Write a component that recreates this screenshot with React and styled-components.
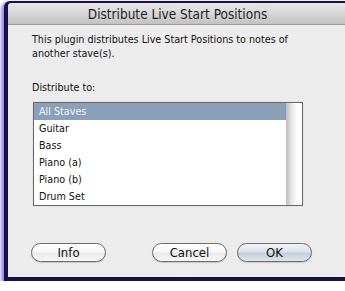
import React, { useState } from 'react';
import styled, { createGlobalStyle } from 'styled-components';

const GlobalStyle = createGlobalStyle`
  body {
    margin: 0;
    background: #ffffff;
    font-family: "DejaVu Sans Condensed", "DejaVu Sans", sans-serif;
  }
`;

const Frame = styled.div`
  width: 339px;
  margin: 1px 0 0 4px;
  padding: 2px 3px 4px 4px;
  background: #160f4c;
  border-radius: 6px 6px 0 0;
  box-shadow: -3px 1px 3px rgba(90, 80, 220, 0.55), 0 5px 5px rgba(110, 100, 230, 0.55);
`;

const Window = styled.div`
  height: 274px;
  display: flex;
  flex-direction: column;
  background: #ececec;
  border-radius: 4px 4px 0 0;
  overflow: hidden;
`;

const TitleBar = styled.div`
  height: 21px;
  flex-shrink: 0;
  display: flex;
  align-items: center;
  justify-content: center;
  background: linear-gradient(#e8e8e8, #d2d2d2 60%, #c2c2c2);
  border-bottom: 1px solid #9a9a9a;
  font-size: 13.5px;
  color: #1e1e1e;
`;

const Content = styled.div`
  flex: 1;
  display: flex;
  flex-direction: column;
  padding: 8px 0 15px 24px;
`;

const Description = styled.p`
  margin: 0;
  width: 275px;
  font-size: 10.7px;
  line-height: 14px;
  color: #111;
`;

const Label = styled.div`
  margin-top: 20px;
  font-size: 10.7px;
  line-height: 14px;
  color: #111;
`;

const ListBox = styled.div`
  margin: 7px 0 0 1px;
  width: 268px;
  display: flex;
  background: #fff;
  border: 1px solid #6a6a6a;
  box-shadow: inset 0 1px 1px rgba(0, 0, 0, 0.25), 0 0 1px rgba(0, 0, 0, 0.2);
`;

const Rows = styled.div`
  flex: 1;
  display: flex;
  flex-direction: column;
`;

const Row = styled.div`
  height: 17px;
  line-height: 17px;
  padding-left: 5px;
  font-size: 10.7px;
  color: ${(p) => (p.selected ? '#f4f6f9' : '#111')};
  background: ${(p) => (p.selected ? '#8a9fb8' : 'transparent')};
`;

const ScrollTrack = styled.div`
  width: 16px;
  background: linear-gradient(to right, #bdbdbd, #e6e6e6 35%, #fdfdfd 70%, #ffffff);
`;

const ButtonRow = styled.div`
  margin-top: auto;
  display: flex;
  align-items: center;
  padding-left: -1px;
`;

const Button = styled.button`
  width: 75px;
  height: 19px;
  margin-left: ${(p) => p.gap || 0}px;
  padding: 0;
  border: 1px solid #6c6c6c;
  border-radius: 10px;
  font-family: "DejaVu Sans Condensed", "DejaVu Sans", sans-serif;
  font-size: 13px;
  color: #111;
  background: ${(p) =>
    p.primary
      ? 'linear-gradient(#f1f4f8, #dbe2ea 45%, #c5cfdb 55%, #dde4ec)'
      : 'linear-gradient(#ffffff, #f7f7f7 45%, #e9e9e9 55%, #f8f8f8)'};
  box-shadow: 0 1px 1px rgba(0, 0, 0, 0.15);
`;

const staves = ['All Staves', 'Guitar', 'Bass', 'Piano (a)', 'Piano (b)', 'Drum Set'];

const App = () => {
  const [selected, setSelected] = useState(0);

  return (
    <>
      <GlobalStyle />
      <Frame>
        <Window>
          <TitleBar>Distribute Live Start Positions</TitleBar>
          <Content>
            <Description>
              This plugin distributes Live Start Positions to notes of another stave(s).
            </Description>
            <Label>Distribute to:</Label>
            <ListBox>
              <Rows>
                {staves.map((name, i) => (
                  <Row key={name} selected={i === selected} onClick={() => setSelected(i)}>
                    {name}
                  </Row>
                ))}
              </Rows>
              <ScrollTrack />
            </ListBox>
            <ButtonRow>
              <Button gap={-1}>Info</Button>
              <Button gap={46}>Cancel</Button>
              <Button gap={10} primary>OK</Button>
            </ButtonRow>
          </Content>
        </Window>
      </Frame>
    </>
  );
};

export default App;
